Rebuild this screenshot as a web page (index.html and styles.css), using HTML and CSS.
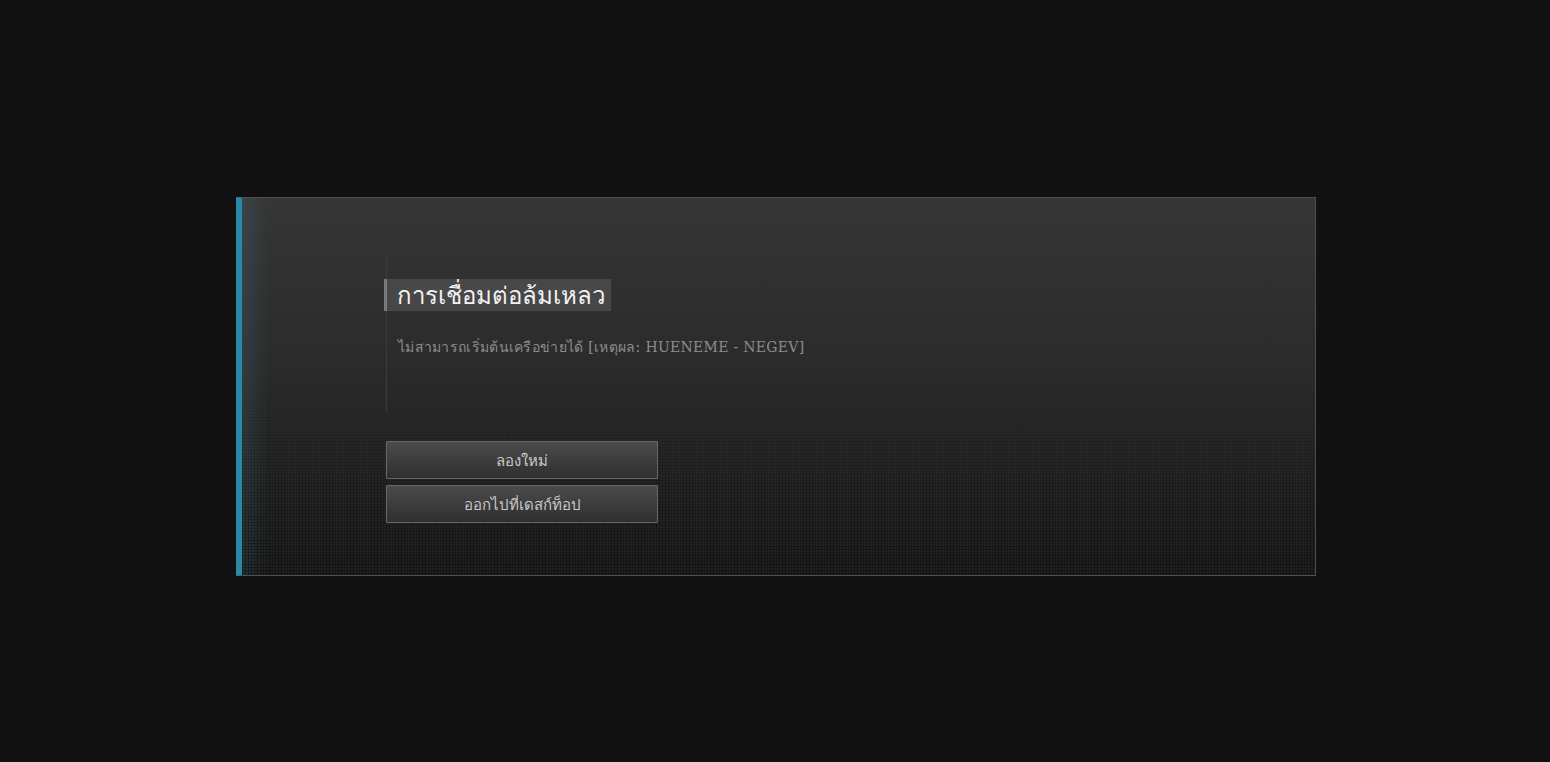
FILE: index.html
```html
<!DOCTYPE html>
<html lang="th">
<head>
<meta charset="UTF-8">
<meta name="viewport" content="width=device-width, initial-scale=1.0">
<title>การเชื่อมต่อล้มเหลว</title>
<link rel="stylesheet" href="styles.css">
</head>
<body>
<div class="dialog">
<div class="glow"></div>
<div class="content">
<div class="info">
<h1 class="title">การเชื่อมต่อล้มเหลว</h1>
<p class="message">ไม่สามารถเริ่มต้นเครือข่ายได้ [เหตุผล: HUENEME - NEGEV]</p>
</div>
<div class="actions">
<button class="btn">ลองใหม่</button>
<button class="btn">ออกไปที่เดสก์ท็อป</button>
</div>
</div>
</div>
</body>
</html>
```

FILE: styles.css
```css
:root {
--accent: #2a8aa6;
--page-bg: #111111;
--line: #4e4e4e;
}

body {
margin: 0;
background-color: var(--page-bg);
font-family: 'Noto Sans', 'DejaVu Sans', sans-serif;
}

.dialog {
position: relative;
box-sizing: border-box;
width: 1080px;
height: 379px;
margin: 197px 0 0 236px;
border: 1px solid var(--line);
border-left: 6px solid var(--accent);
background: linear-gradient(180deg, #363636 0%, #2c2c2c 40%, #1f1f1f 100%);
overflow: hidden;
}

/* fine grid texture fading in towards the bottom */
.dialog::after {
content: '';
position: absolute;
inset: 0;
background-image:
linear-gradient(90deg, rgba(0,0,0,0.35) 1px, transparent 1px),
linear-gradient(rgba(0,0,0,0.35) 1px, transparent 1px);
background-size: 3px 3px;
-webkit-mask-image: linear-gradient(180deg, transparent 45%, rgba(0,0,0,0.9) 100%);
mask-image: linear-gradient(180deg, transparent 45%, rgba(0,0,0,0.9) 100%);
pointer-events: none;
}

.glow {
position: absolute;
top: 0;
bottom: 0;
left: 0;
width: 26px;
background: linear-gradient(90deg, rgba(70,140,170,0.18), rgba(70,140,170,0));
pointer-events: none;
}

.content {
position: relative;
z-index: 1;
padding: 54px 0 0 144px;
}

.info {
box-sizing: border-box;
height: 161px;
padding-top: 27px;
border-left: 1px solid #3c3c3c;
}

.title {
display: inline-block;
margin: 0 0 0 -3px;
padding: 0 6px 0 10px;
height: 32px;
line-height: 32px;
font-size: 24px;
font-weight: normal;
color: #f2f2f2;
background-color: rgba(80,80,80,0.75);
border-left: 3px solid #7a7a7a;
}

.message {
margin: 25px 0 0 11px;
font-family: 'DejaVu Serif', 'Liberation Serif', serif;
font-size: 14px;
letter-spacing: 0.3px;
color: #8c8c8c;
}

.actions {
display: flex;
flex-direction: column;
gap: 6px;
margin-top: 28px;
}

.btn {
width: 272px;
height: 38px;
padding: 2px 0 0;
font-family: 'Noto Sans', 'DejaVu Sans', sans-serif;
font-size: 15px;
color: #c8c8c8;
background: linear-gradient(180deg, #4b4b4b, #2f2f2f);
border: 1px solid #676767;
border-radius: 1px;
cursor: pointer;
}
```
